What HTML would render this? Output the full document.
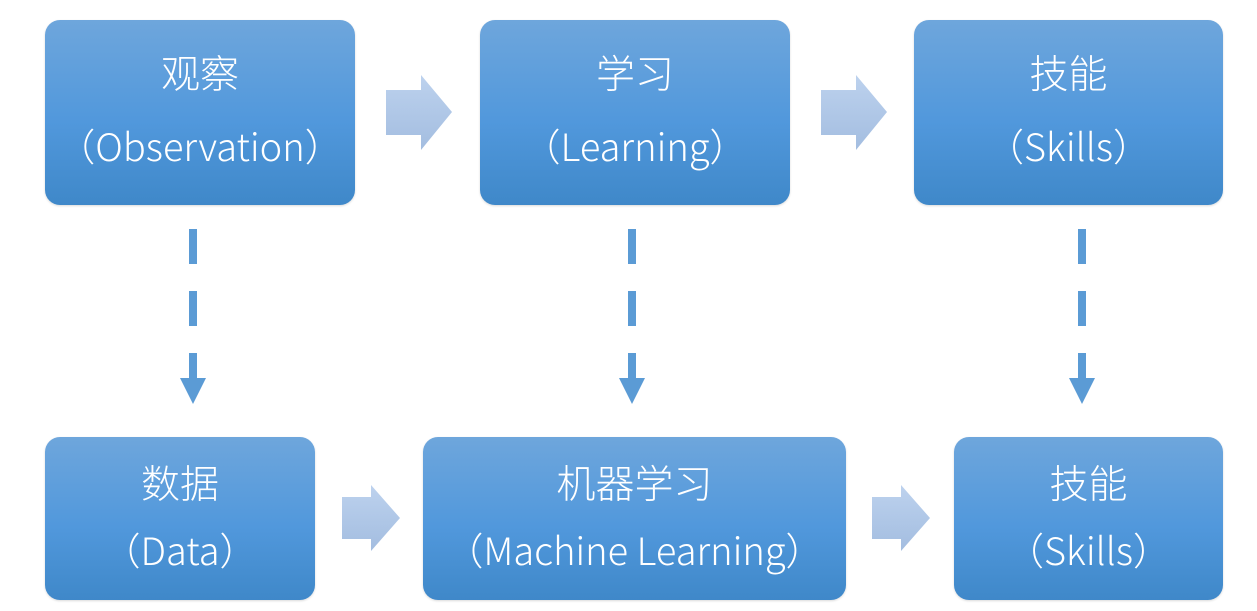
<!DOCTYPE html><html><head><meta charset="utf-8"><style>
body{margin:0;width:1257px;height:611px;background:#fff;position:relative;overflow:hidden;font-family:"Noto Sans CJK SC","Liberation Sans",sans-serif}
.b{position:absolute;border-radius:15px;background:linear-gradient(#6ea6dc,#5198dc 55%,#3f88c9);color:#fff;text-align:center;font-size:38px;font-weight:300;box-shadow:0 1px 2px rgba(0,0,0,.15)}
.b div{position:absolute;left:0;right:0;line-height:40px;white-space:nowrap}
.b .c{font-size:39px}
svg{position:absolute;left:0;top:0}
</style></head><body>
<div class="b" style="left:45px;top:20px;width:310px;height:185px"><div class="c" style="top:32px">观察</div><div style="top:105px">（Observation）</div></div>
<div class="b" style="left:480px;top:20px;width:310px;height:185px"><div class="c" style="top:32px">学习</div><div style="top:105px">（Learning）</div></div>
<div class="b" style="left:914px;top:20px;width:309px;height:185px"><div class="c" style="top:32px">技能</div><div style="top:105px">（Skills）</div></div>
<div class="b" style="left:45px;top:437px;width:270px;height:163px"><div class="c" style="top:25px">数据</div><div style="top:92px">（Data）</div></div>
<div class="b" style="left:423px;top:437px;width:423px;height:163px"><div class="c" style="top:25px">机器学习</div><div style="top:92px">（Machine Learning）</div></div>
<div class="b" style="left:954px;top:437px;width:269px;height:163px"><div class="c" style="top:25px">技能</div><div style="top:92px">（Skills）</div></div>
<svg width="1257" height="611"><defs><linearGradient id="g" x1="0" y1="0" x2="0" y2="1"><stop offset="0" stop-color="#bdd2ee"/><stop offset="1" stop-color="#a3bde0"/></linearGradient></defs>
<path d="M386 90H421V75L452 112L421 150V135H386Z" fill="url(#g)"/>
<path d="M821 90H856V75L887 112L856 150V135H821Z" fill="url(#g)"/>
<path d="M342 497H371V485L400 518L371 551V539H342Z" fill="url(#g)"/>
<path d="M872 497H901V485L930 518L901 551V539H872Z" fill="url(#g)"/>
<g fill="#5b9bd5">
<rect x="189" y="229" width="8" height="35"/><rect x="189" y="291" width="8" height="35"/><rect x="189" y="353" width="8" height="26"/><path d="M180 378H206L193 404Z"/>
<rect x="628" y="229" width="8" height="35"/><rect x="628" y="291" width="8" height="35"/><rect x="628" y="353" width="8" height="26"/><path d="M619 378H645L632 404Z"/>
<rect x="1078" y="229" width="8" height="35"/><rect x="1078" y="291" width="8" height="35"/><rect x="1078" y="353" width="8" height="26"/><path d="M1069 378H1095L1082 404Z"/>
</g></svg>
</body></html>
